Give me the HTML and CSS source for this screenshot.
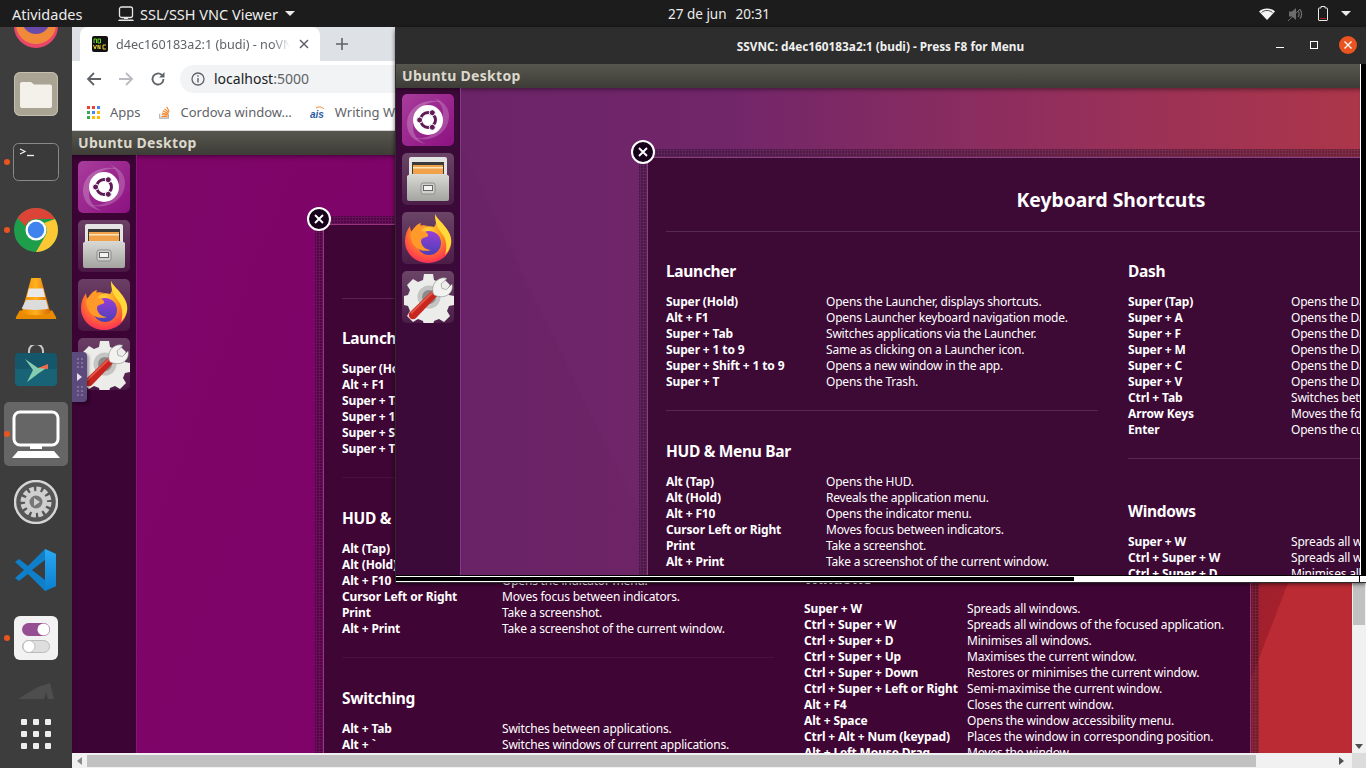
FILE: index.html
```html
<!DOCTYPE html>
<html lang="pt">
<head>
<meta charset="utf-8">
<title>SSVNC</title>
<link rel="stylesheet" href="styles.css">
</head>
<body>
<svg class="defs" width="0" height="0" aria-hidden="true">
  <defs>
    <radialGradient id="ffBody" cx="0.5" cy="0.35" r="0.75"><stop offset="0" stop-color="#ffd43a"/><stop offset="0.45" stop-color="#ff8a1e"/><stop offset="0.8" stop-color="#ff3f4e"/><stop offset="1" stop-color="#e3176f"/></radialGradient>
    <linearGradient id="ffCore" x1="0" y1="0" x2="0" y2="1"><stop offset="0" stop-color="#9a3fd6"/><stop offset="1" stop-color="#4a3fb8"/></linearGradient>
    <linearGradient id="ubuTile" x1="0" y1="0" x2="1" y2="1"><stop offset="0" stop-color="#a83d9c"/><stop offset="1" stop-color="#8c1181"/></linearGradient>
    <linearGradient id="cabFront" x1="0" y1="0" x2="0" y2="1"><stop offset="0" stop-color="#d9d9d6"/><stop offset="1" stop-color="#a3a3a0"/></linearGradient>
    <linearGradient id="vlcCone" x1="0" y1="0" x2="1" y2="0"><stop offset="0" stop-color="#f08a00"/><stop offset="0.5" stop-color="#ffb020"/><stop offset="1" stop-color="#d96a00"/></linearGradient>
    <linearGradient id="codeBlue" x1="0" y1="0" x2="0" y2="1"><stop offset="0" stop-color="#2aa9f2"/><stop offset="1" stop-color="#0a7fd0"/></linearGradient>

    <symbol id="i-ubuntu" viewBox="0 0 52 52">
      <rect width="52" height="52" rx="4" fill="url(#ubuTile)"/>
      <path d="M5 30C5 12 24 3 40 8 27 6 13 13 11 30 10 40 16 47 24 50 13 48 5 41 5 30Z" fill="#fff" opacity=".22"/>
      <path d="M47 22C47 40 28 49 12 44 25 46 39 39 41 22 42 14 38 8 32 4 41 7 47 13 47 22Z" fill="#fff" opacity=".2"/>
      <circle cx="26" cy="26" r="15" fill="#fff"/>
      <circle cx="26" cy="26" r="7.500" fill="none" stroke="#5e1b57" stroke-width="3"/>
      <circle cx="17.600" cy="26" r="3" fill="#5e1b57" stroke="#fff"/>
      <circle cx="30.300" cy="18.700" r="3" fill="#5e1b57" stroke="#fff"/>
      <circle cx="30.300" cy="33.300" r="3" fill="#5e1b57" stroke="#fff"/>
    </symbol>

    <symbol id="i-cabinet" viewBox="0 0 52 52">
      <path d="M9 4h34a2 2 0 0 1 2 2v18H7V6a2 2 0 0 1 2-2Z" fill="#e4e4e2"/>
      <rect x="10" y="9" width="32" height="14" fill="#3a3a3a"/>
      <rect x="11" y="12" width="30" height="10" fill="#f0a14a"/>
      <rect x="11" y="14" width="30" height="1.500" fill="#fbe3b8"/>
      <path d="M8 21h36l3 2v23a2 2 0 0 1-2 2H7a2 2 0 0 1-2-2V23Z" fill="url(#cabFront)"/>
      <rect x="19" y="30" width="14" height="11" rx="2" fill="#cfcfcc" stroke="#8e8e8b"/>
      <rect x="21.500" y="32.500" width="9" height="5" fill="#f4f4f2" stroke="#666"/>
    </symbol>

    <symbol id="i-firefox" viewBox="0 0 52 52">
      <path d="M33 2c2 5 7 8 11 14 4 5 6 11 5 16-1 11-11 19-23 19C13 51 3 41 3 29c0-6 2-11 5-15 0 3 1 5 2 6 1-4 5-8 9-9-1 2-1 4 0 5 5-2 10-2 13-1C36 10 33 6 33 2Z" fill="url(#ffBody)"/>
      <path d="M33 2c2 5 7 8 11 14 4 5 6 11 5 16-1 4-3 8-6 11 2-6 2-14-2-20-3-5-8-8-8-21Z" fill="#ffd93a"/>
      <circle cx="27" cy="31" r="12" fill="url(#ffCore)"/>
      <path d="M9 20c4-5 10-8 17-6-4 1-6 3-7 5 5 0 8 3 7 5-2 2-7 1-7 5 0 5 5 9 10 9-9 3-18-2-20-11-1-3-1-5 0-7Z" fill="#ff9a2a"/>
    </symbol>

    <symbol id="i-tools" viewBox="0 0 52 52">
      <path d="M22 3h9l1 6 5 2 5-3 6 6-3 5 2 5 5 1v9l-5 1-2 5 3 5-6 6-5-3-5 2-1 4h-9l-1-4-5-2-5 3-6-6 3-5-2-5-4-1v-9l4-1 2-5-3-5 6-6 5 3 5-2Z" fill="#ececea"/>
      <circle cx="27" cy="26" r="11.500" fill="#c4c4c2"/>
      <circle cx="27" cy="26" r="7" fill="#8d8a8a"/>
      <path d="M8 41 32 18l5 5-23 24a4 4 0 0 1-6-6Z" fill="#c8261f"/>
      <path d="M8.500 41.500 32 18.500l1.500 1.500-24 23Z" fill="#e2584c"/>
      <path d="M32 24c-3-5-1-13 5-16 3-1.500 6-1.500 8-.5l-6 5.500 1 4.500 4.500 1 5.500-5.500c1 3.500 0 7-2.500 9.500-4 4-10 4-15.500 1.500Z" fill="#f2f2f0" stroke="#888" stroke-width=".6"/>
    </symbol>
  </defs>
</svg>

<div class="desktop">
  <header class="topbar">
    <div class="topbar-left">
      <span class="activities">Atividades</span>
      <span class="app-menu">
        <svg class="app-glyph" viewBox="0 0 16 16"><rect x="1.500" y="1" width="13" height="10.500" rx="2" fill="none" stroke="#e6e6e6" stroke-width="1.300"/><path d="M6 11.500h4v1.500H6ZM1 13.500h14l1 1.500H0Z" fill="#e6e6e6"/></svg>
        <span>SSL/SSH VNC Viewer</span>
        <i class="caret"></i>
      </span>
    </div>
    <div class="clock"><span>27 de jun</span><span>20:31</span></div>
    <div class="tray">
      <svg class="wifi" viewBox="0 0 16 12"><path d="M0 3.500C4-.5 12-.5 16 3.500L8 12Z" fill="#f4f4f4"/><path d="M2.500 4.500C5.500 1.800 10.500 1.800 13.500 4.500" fill="none" stroke="#1c1c1c" stroke-width=".8"/></svg>
      <svg class="sound" viewBox="0 0 15 14"><path d="M1 4.500h3L8 1v12L4 9.500H1Z" fill="#6d6d6d"/><path d="M10 4c1.300 1.700 1.300 4.300 0 6M12 2.500c2.200 2.500 2.200 6.500 0 9" fill="none" stroke="#6d6d6d" stroke-width="1.200"/><path d="M0 14 12 2" stroke="#6d6d6d" stroke-width="1"/></svg>
      <svg class="battery" viewBox="0 0 10 15"><path d="M3 .5h4v1.500h2a.6.6 0 0 1 .5.5v11.500a.6.6 0 0 1-.5.5H1a.6.6 0 0 1-.5-.5V2.500A.6.6 0 0 1 1 2h2Z" fill="none" stroke="#e8e8e8"/><rect x="2" y="12" width="6" height="1" fill="#c01c1c"/></svg>
      <i class="caret caret-tray"></i>
    </div>
  </header>

  <div class="workspace">
    <aside class="dock">
      <div class="dock-item dock-first">
        <svg class="dock-icon" viewBox="0 0 44 44"><circle cx="22" cy="22" r="22" fill="#e8476a"/><circle cx="22" cy="20" r="20" fill="#f08a3a"/><circle cx="22" cy="16" r="14" fill="#6a4aa8"/></svg>
      </div>
      <div class="dock-item">
        <svg class="dock-icon" viewBox="0 0 44 44"><rect width="44" height="44" rx="6" fill="#a9a493"/><rect x=".5" y=".5" width="43" height="43" rx="6" fill="none" stroke="#c4c0b2"/><path d="M6 12a2 2 0 0 1 2-2h9l3 2.500h16a2 2 0 0 1 2 2V34a2 2 0 0 1-2 2H8a2 2 0 0 1-2-2Z" fill="#f3f1ea"/></svg>
      </div>
      <div class="dock-item is-running">
        <svg class="dock-icon terminal" viewBox="0 0 46 38"><rect x=".5" y=".5" width="45" height="37" rx="5" fill="#3a3a3a" stroke="#8a8a8a"/><path d="M7 6l5 2.500-5 2.500" fill="none" stroke="#f2f2f2" stroke-width="1.200"/><path d="M14 12.500h7" stroke="#f2f2f2" stroke-width="1.300"/></svg>
      </div>
      <div class="dock-item is-running">
        <svg class="dock-icon" viewBox="0 0 44 44"><circle cx="22" cy="22" r="22" fill="#1e9e4a"/><path d="M3.500 10A22 22 0 0 1 41 11H22a11 11 0 0 0-10.500 7Z" fill="#dc4437"/><path d="M41 11a22 22 0 0 1-19 33l9.500-16.500A11 11 0 0 0 30 15Z" fill="#fcc934"/><circle cx="22" cy="22" r="10.500" fill="#fff"/><circle cx="22" cy="22" r="8.200" fill="#3f83ee"/></svg>
      </div>
      <div class="dock-item">
        <svg class="dock-icon" viewBox="0 0 44 46"><path d="M5 36 1 43c-.5 1 0 2 1 2h40c1 0 1.500-1 1-2l-4-7Z" fill="#e98b00"/><path d="M17 2h10l10 36c-4 4-26 4-30 0Z" fill="url(#vlcCone)"/><path d="M14.500 13h15l2 9h-19Z" fill="#e9e9e9"/><path d="M11.500 25h21l2.500 9c-6 2-22 2-28 0Z" fill="#dcdcdc"/></svg>
      </div>
      <div class="dock-item">
        <svg class="dock-icon store" viewBox="0 0 44 42"><path d="M15 8V6a7 7 0 0 1 14 0v2" fill="none" stroke="#c8c8c8" stroke-width="2"/><rect x="1" y="8" width="42" height="33" rx="4" fill="#14566a"/><path d="M1 24h42v13a4 4 0 0 1-4 4H5a4 4 0 0 1-4-4Z" fill="#1d6d80" opacity=".6"/><path d="M11 14 24 23 34 22 25 28 13 37 19 25Z" fill="#86cdb0"/><path d="M24 23 34 19 34 24Z" fill="#ef6a4a"/></svg>
      </div>
      <div class="dock-item is-running is-active">
        <svg class="dock-icon monitor" viewBox="0 0 48 48"><rect x="2" y="2" width="44" height="33" rx="6" fill="none" stroke="#fff" stroke-width="3"/><path d="M18 35h12v4H18ZM6 41h36l6 7H0Z" fill="#fff"/></svg>
      </div>
      <div class="dock-item">
        <svg class="dock-icon" viewBox="0 0 44 44"><circle cx="22" cy="22" r="21" fill="#565656" stroke="#d6d6d6" stroke-width="2.400"/><circle cx="22" cy="22" r="13" fill="none" stroke="#cfcfcf" stroke-width="5" stroke-dasharray="4.500 2.300"/><circle cx="22" cy="22" r="11" fill="#cfcfcf"/><circle cx="22" cy="22" r="6.500" fill="#777"/><path d="M20 18l6 4-6 4Z" fill="#cfcfcf"/></svg>
      </div>
      <div class="dock-item">
        <svg class="dock-icon" viewBox="0 0 44 44"><path d="M31 1 14 18 5 11 1 14 10 22 1 30l4 3 9-7 17 17 11-5V6Z" fill="#0f7fc9"/><path d="M31 1 42 6v32l-11 5Z" fill="url(#codeBlue)"/><path d="M31 12 18 22l13 10Z" fill="#3c3c3c"/></svg>
      </div>
      <div class="dock-item is-running">
        <svg class="dock-icon" viewBox="0 0 44 44"><rect width="44" height="44" rx="6" fill="#f2f2f2"/><rect x="8" y="7" width="28" height="13" rx="6.500" fill="#964e92"/><circle cx="29.500" cy="13.500" r="6" fill="#fff"/><rect x="8.500" y="24.500" width="27" height="12" rx="6" fill="#dedede" stroke="#bbb"/><circle cx="15" cy="30.500" r="6" fill="#fff" stroke="#bbb"/></svg>
      </div>
      <div class="dock-item dock-dim">
        <svg class="dim-icon" viewBox="0 0 36 16"><path d="M0 16 20 4 32 0l4 16h-6l-2-7-2 7Z" fill="#4e4e4e"/></svg>
      </div>
      <div class="app-grid">
        <i></i><i></i><i></i><i></i><i></i><i></i><i></i><i></i><i></i>
      </div>
    </aside>

    <section class="browser">
      <div class="tabstrip">
        <div class="tab">
          <svg class="favicon" viewBox="0 0 16 16"><rect width="16" height="16" rx="2" fill="#111"/><path d="M2 7V3h2.500v4M6 3h2.500v4H6Z" fill="none" stroke="#6bd42a"/><path d="M1.500 9l1.500 4 1.500-4M6 13V9l2 4V9M14 9h-3v4h3" fill="none" stroke="#e3d22a"/></svg>
          <span class="tab-title">d4ec160183a2:1 (budi) - noVNC</span>
          <svg class="tab-close" viewBox="0 0 10 10"><path d="M1 1l8 8M9 1 1 9" stroke="#5f6368" stroke-width="1.500"/></svg>
        </div>
        <svg class="new-tab" viewBox="0 0 12 12"><path d="M6 0v12M0 6h12" stroke="#5f6368" stroke-width="1.600"/></svg>
      </div>
      <div class="toolbar">
        <svg class="nav-icon" viewBox="0 0 16 16"><path d="M15 8H2M8 2 2 8l6 6" fill="none" stroke="#5f6368" stroke-width="1.800"/></svg>
        <svg class="nav-icon" viewBox="0 0 16 16"><path d="M1 8h13M8 2l6 6-6 6" fill="none" stroke="#b8bbbf" stroke-width="1.800"/></svg>
        <svg class="nav-icon" viewBox="0 0 16 16"><path d="M13.500 8a5.500 5.500 0 1 1-1.700-4" fill="none" stroke="#5f6368" stroke-width="1.800"/><path d="M14.500 1v5.500H9Z" fill="#5f6368"/></svg>
        <div class="omnibox">
          <svg class="info" viewBox="0 0 14 14"><circle cx="7" cy="7" r="6" fill="none" stroke="#5f6368" stroke-width="1.300"/><path d="M7 6v4.500M7 3.300v1.500" stroke="#5f6368" stroke-width="1.400"/></svg>
          <span class="url">localhost<em>:5000</em></span>
        </div>
      </div>
      <div class="bookmarks">
        <span class="bookmark bm-apps">
          <svg class="bm-icon" viewBox="0 0 13 13"><path d="M0 0h3v3H0Z" fill="#ea4335"/><path d="M5 0h3v3H5Z" fill="#ea4335"/><path d="M10 0h3v3h-3Z" fill="#4285f4"/><path d="M0 5h3v3H0Z" fill="#34a853"/><path d="M5 5h3v3H5Z" fill="#4285f4"/><path d="M10 5h3v3h-3Z" fill="#fbbc05"/><path d="M0 10h3v3H0Z" fill="#34a853"/><path d="M5 10h3v3H5Z" fill="#fbbc05"/><path d="M10 10h3v3h-3Z" fill="#fbbc05"/></svg>
          Apps
        </span>
        <span class="bookmark bm-cordova">
          <svg class="bm-icon" viewBox="0 0 13 15"><path d="M1 9v5h10V9" fill="none" stroke="#a8a8a8" stroke-width="1.200"/><path d="M3 12h7M3 10l7 .6M3.500 8l6.800 1.800M4.500 5.500l6.200 3.200M6.500 3.200l5 4.500M9 1l3 5.500" stroke="#f48024" stroke-width="1.200"/></svg>
          Cordova window…
        </span>
        <span class="bookmark bm-ais">
          <svg class="bm-icon ais" viewBox="0 0 17 13"><text x="0" y="12" class="ais-text">ais</text><path d="M6 2c3-2 6-1 8 1" fill="none" stroke="#e8862a"/></svg>
          Writing Wizard
        </span>
      </div>
      <div class="browser-body">
        <div class="page">
          <div class="unity unity-outer">
            <div class="panel">Ubuntu Desktop</div>
            <div class="unity-main">
              <nav class="launcher">
                <svg class="tile tile-lit"><use href="#i-ubuntu"/></svg>
                <span class="tile"><svg><use href="#i-cabinet"/></svg></span>
                <span class="tile"><svg><use href="#i-firefox"/></svg></span>
                <span class="tile"><svg><use href="#i-tools"/></svg></span>
              </nav>
              <div class="wall">
                <article class="shortcuts">
                  <span class="sc-close"><svg viewBox="0 0 10 10"><path d="M1 1l8 8M9 1 1 9" stroke="#fff" stroke-width="1.900"/></svg></span>
                  <div class="sc-inner">
                    <h1 class="sc-title">Keyboard Shortcuts</h1>
                    <div class="sc-cols">
                      <div class="sc-col sc-col-left">
                        <section class="sc-sec">
                          <h2>Launcher</h2>
                          <div class="row"><b>Super (Hold)</b><span>Opens the Launcher, displays shortcuts.</span></div>
                          <div class="row"><b>Alt + F1</b><span>Opens Launcher keyboard navigation mode.</span></div>
                          <div class="row"><b>Super + Tab</b><span>Switches applications via the Launcher.</span></div>
                          <div class="row"><b>Super + 1 to 9</b><span>Same as clicking on a Launcher icon.</span></div>
                          <div class="row"><b>Super + Shift + 1 to 9</b><span>Opens a new window in the app.</span></div>
                          <div class="row"><b>Super + T</b><span>Opens the Trash.</span></div>
                        </section>
                        <section class="sc-sec">
                          <h2>HUD &amp; Menu Bar</h2>
                          <div class="row"><b>Alt (Tap)</b><span>Opens the HUD.</span></div>
                          <div class="row"><b>Alt (Hold)</b><span>Reveals the application menu.</span></div>
                          <div class="row"><b>Alt + F10</b><span>Opens the indicator menu.</span></div>
                          <div class="row"><b>Cursor Left or Right</b><span>Moves focus between indicators.</span></div>
                          <div class="row"><b>Print</b><span>Take a screenshot.</span></div>
                          <div class="row"><b>Alt + Print</b><span>Take a screenshot of the current window.</span></div>
                        </section>
                        <section class="sc-sec">
                          <h2>Switching</h2>
                          <div class="row"><b>Alt + Tab</b><span>Switches between applications.</span></div>
                          <div class="row"><b>Alt + `</b><span>Switches windows of current applications.</span></div>
                        </section>
                      </div>
                      <div class="sc-col sc-col-right">
                        <section class="sc-sec">
                          <h2>Dash</h2>
                          <div class="row"><b>Super (Tap)</b><span>Opens the Dash Home.</span></div>
                          <div class="row"><b>Super + A</b><span>Opens the Dash App Lens.</span></div>
                          <div class="row"><b>Super + F</b><span>Opens the Dash Files Lens.</span></div>
                          <div class="row"><b>Super + M</b><span>Opens the Dash Music Lens.</span></div>
                          <div class="row"><b>Super + C</b><span>Opens the Dash Photo Lens.</span></div>
                          <div class="row"><b>Super + V</b><span>Opens the Dash Video Lens.</span></div>
                          <div class="row"><b>Ctrl + Tab</b><span>Switches between Lenses.</span></div>
                          <div class="row"><b>Arrow Keys</b><span>Moves the focus.</span></div>
                          <div class="row"><b>Enter</b><span>Opens the currently focused item.</span></div>
                        </section>
                        <section class="sc-sec sc-sec-tall">
                          <h2>Windows</h2>
                          <div class="row"><b>Super + W</b><span>Spreads all windows.</span></div>
                          <div class="row"><b>Ctrl + Super + W</b><span>Spreads all windows of the focused application.</span></div>
                          <div class="row"><b>Ctrl + Super + D</b><span>Minimises all windows.</span></div>
                          <div class="row"><b>Ctrl + Super + Up</b><span>Maximises the current window.</span></div>
                          <div class="row"><b>Ctrl + Super + Down</b><span>Restores or minimises the current window.</span></div>
                          <div class="row"><b>Ctrl + Super + Left or Right</b><span>Semi-maximise the current window.</span></div>
                          <div class="row"><b>Alt + F4</b><span>Closes the current window.</span></div>
                          <div class="row"><b>Alt + Space</b><span>Opens the window accessibility menu.</span></div>
                          <div class="row"><b>Ctrl + Alt + Num (keypad)</b><span>Places the window in corresponding position.</span></div>
                          <div class="row"><b>Alt + Left Mouse Drag</b><span>Moves the window.</span></div>
                        </section>
                      </div>
                    </div>
                  </div>
                </article>
              </div>
            </div>
          </div>
          <div class="novnc-handle">
            <i class="handle-dots"></i><i class="handle-arrow"></i><i class="handle-dots"></i>
          </div>
        </div>
        <div class="vscroll">
          <div class="vthumb"></div>
          <i class="arrow-down"></i>
        </div>
        <div class="hscroll">
          <i class="arrow-left"></i>
          <div class="hthumb"></div>
          <i class="arrow-right"></i>
        </div>
        <div class="corner"></div>
      </div>
    </section>
  </div>

  <section class="vnc-window">
    <div class="vnc-title">
      <span class="vnc-caption">SSVNC: d4ec160183a2:1 (budi) - Press F8 for Menu</span>
      <div class="wm-buttons">
        <svg class="wm-min" viewBox="0 0 8 2"><rect width="8" height="1" fill="#fff"/></svg>
        <svg class="wm-max" viewBox="0 0 8 8"><rect x=".5" y=".5" width="7" height="7" fill="none" stroke="#fff"/></svg>
        <span class="wm-close"><svg viewBox="0 0 8 8"><path d="M.5.5l7 7M7.500.5l-7 7" stroke="#fff" stroke-width="1.300"/></svg></span>
      </div>
    </div>
    <div class="vnc-frame">
      <div class="vnc-view">
        <div class="unity unity-inner">
          <div class="panel">Ubuntu Desktop</div>
          <div class="unity-main">
            <nav class="launcher">
              <svg class="tile tile-lit"><use href="#i-ubuntu"/></svg>
              <span class="tile"><svg><use href="#i-cabinet"/></svg></span>
              <span class="tile"><svg><use href="#i-firefox"/></svg></span>
              <span class="tile"><svg><use href="#i-tools"/></svg></span>
            </nav>
            <div class="wall">
              <article class="shortcuts">
                <span class="sc-close"><svg viewBox="0 0 10 10"><path d="M1 1l8 8M9 1 1 9" stroke="#fff" stroke-width="1.900"/></svg></span>
                <div class="sc-inner">
                  <h1 class="sc-title">Keyboard Shortcuts</h1>
                  <div class="sc-cols">
                    <div class="sc-col sc-col-left">
                      <section class="sc-sec">
                        <h2>Launcher</h2>
                        <div class="row"><b>Super (Hold)</b><span>Opens the Launcher, displays shortcuts.</span></div>
                        <div class="row"><b>Alt + F1</b><span>Opens Launcher keyboard navigation mode.</span></div>
                        <div class="row"><b>Super + Tab</b><span>Switches applications via the Launcher.</span></div>
                        <div class="row"><b>Super + 1 to 9</b><span>Same as clicking on a Launcher icon.</span></div>
                        <div class="row"><b>Super + Shift + 1 to 9</b><span>Opens a new window in the app.</span></div>
                        <div class="row"><b>Super + T</b><span>Opens the Trash.</span></div>
                      </section>
                      <section class="sc-sec">
                        <h2>HUD &amp; Menu Bar</h2>
                        <div class="row"><b>Alt (Tap)</b><span>Opens the HUD.</span></div>
                        <div class="row"><b>Alt (Hold)</b><span>Reveals the application menu.</span></div>
                        <div class="row"><b>Alt + F10</b><span>Opens the indicator menu.</span></div>
                        <div class="row"><b>Cursor Left or Right</b><span>Moves focus between indicators.</span></div>
                        <div class="row"><b>Print</b><span>Take a screenshot.</span></div>
                        <div class="row"><b>Alt + Print</b><span>Take a screenshot of the current window.</span></div>
                      </section>
                    </div>
                    <div class="sc-col sc-col-right">
                      <section class="sc-sec">
                        <h2>Dash</h2>
                        <div class="row"><b>Super (Tap)</b><span>Opens the Dash Home.</span></div>
                        <div class="row"><b>Super + A</b><span>Opens the Dash App Lens.</span></div>
                        <div class="row"><b>Super + F</b><span>Opens the Dash Files Lens.</span></div>
                        <div class="row"><b>Super + M</b><span>Opens the Dash Music Lens.</span></div>
                        <div class="row"><b>Super + C</b><span>Opens the Dash Photo Lens.</span></div>
                        <div class="row"><b>Super + V</b><span>Opens the Dash Video Lens.</span></div>
                        <div class="row"><b>Ctrl + Tab</b><span>Switches between Lenses.</span></div>
                        <div class="row"><b>Arrow Keys</b><span>Moves the focus.</span></div>
                        <div class="row"><b>Enter</b><span>Opens the currently focused item.</span></div>
                      </section>
                      <section class="sc-sec sc-sec-tall">
                        <h2>Windows</h2>
                        <div class="row"><b>Super + W</b><span>Spreads all windows.</span></div>
                        <div class="row"><b>Ctrl + Super + W</b><span>Spreads all windows of the focused application.</span></div>
                        <div class="row"><b>Ctrl + Super + D</b><span>Minimises all windows.</span></div>
                      </section>
                    </div>
                  </div>
                </div>
              </article>
            </div>
          </div>
        </div>
        <div class="vnc-vbar"></div>
      </div>
      <div class="vnc-hbar"><div class="vnc-hthumb"></div></div>
    </div>
  </section>
</div>
</body>
</html>
```

FILE: styles.css
```css
* { box-sizing: border-box; }
html, body { margin: 0; padding: 0; height: 100%; overflow: hidden; }
body { font-family: "Noto Sans", "Open Sans", sans-serif; background: #3c3c3c; }
.defs { position: absolute; }
h1, h2 { margin: 0; }

.desktop { position: relative; width: 1366px; height: 768px; overflow: hidden; display: flex; flex-direction: column; }

/* top bar */
.topbar { height: 27px; flex: none; background: #1c1c1c; color: #ececec; font-size: 14.500px; display: grid; grid-template-columns: 656px auto 1fr; align-items: center; padding: 0 15px 0 12px; }
.topbar-left { display: flex; align-items: center; gap: 34px; }
.activities { width: 72px; white-space: nowrap; }
.app-menu { display: flex; align-items: center; gap: 6px; }
.app-glyph { width: 16px; height: 16px; }
.caret { width: 0; height: 0; border-left: 5px solid transparent; border-right: 5px solid transparent; border-top: 5px solid #ececec; margin-left: 1px; }
.clock { display: flex; gap: 9px; font-size: 13.500px; }
.tray { display: flex; align-items: center; justify-content: flex-end; }
.wifi { width: 16px; height: 12px; }
.sound { width: 15px; height: 14px; margin-left: 13px; }
.battery { width: 10px; height: 15px; margin-left: 15px; }
.caret-tray { margin-left: 13px; }

/* dock */
.workspace { flex: 1; display: flex; min-height: 0; }
.dock { width: 72px; flex: none; background: #3d3d3d; display: flex; flex-direction: column; align-items: center; position: relative; overflow: hidden; }
.dock-item { position: relative; width: 64px; height: 64px; margin-bottom: 4px; flex: none; display: flex; align-items: center; justify-content: center; border-radius: 5px; }
.dock-first { margin-top: -33px; }
.dock-icon { width: 44px; height: 44px; }
.dock-icon.terminal { width: 46px; height: 38px; }
.dock-icon.store { height: 42px; }
.dock-icon.monitor { width: 48px; height: 48px; }
.is-active { background: #666; }
.is-running::before { content: ""; position: absolute; left: 0; top: 29px; width: 6px; height: 6px; border-radius: 50%; background: #e95420; }
.dim-icon { width: 36px; height: 16px; }
.dock-dim { position: absolute; top: 656px; height: 16px; margin: 0; }
.app-grid { position: absolute; top: 692px; left: 21px; display: grid; grid-template-columns: repeat(3, 6px); gap: 6px; }
.app-grid i { width: 6px; height: 6px; border-radius: 1px; background: #ededed; }

/* browser */
.browser { flex: 1; min-width: 0; display: flex; flex-direction: column; background: #fff; }
.tabstrip { height: 34px; flex: none; background: #dee1e6; display: flex; align-items: stretch; padding-left: 8px; }
.tab { width: 240px; background: #fff; border-radius: 8px 8px 0 0; display: flex; align-items: center; padding: 0 10px 0 12px; gap: 8px; font-size: 12.600px; color: #5f6368; }
.favicon { width: 16px; height: 16px; flex: none; }
.tab-title { width: 174px; white-space: nowrap; overflow: hidden; flex: none; -webkit-mask-image: linear-gradient(90deg, #000 90%, transparent); mask-image: linear-gradient(90deg, #000 90%, transparent); }
.tab-close { width: 10px; height: 10px; flex: none; margin-left: 1px; }
.new-tab { width: 12px; height: 12px; margin: 11px 0 0 16px; }
.toolbar { height: 35px; flex: none; background: #fff; display: flex; align-items: center; padding-left: 14px; gap: 16px; }
.nav-icon { width: 16px; height: 16px; }
.omnibox { width: 400px; height: 28px; margin-left: -2px; border-radius: 14px; background: #f1f3f4; display: flex; align-items: center; padding-left: 11px; gap: 9px; }
.info { width: 14px; height: 14px; }
.url { font-size: 14px; color: #202124; }
.url em { font-style: normal; color: #5f6368; }
.bookmarks { height: 35px; flex: none; background: #fff; border-bottom: 1px solid #d4d4d4; display: flex; align-items: center; padding: 0 0 2px 15px; font-size: 13px; color: #5f6368; }
.bookmark { display: flex; align-items: center; gap: 10px; white-space: nowrap; }
.bm-icon { width: 13px; height: 13px; flex: none; }
.bm-cordova { margin-left: 17px; }
.bm-ais { margin-left: 18px; gap: 8px; }
.bm-icon.ais { width: 17px; }
.ais-text { font: italic 700 10px "Liberation Sans", sans-serif; fill: #2c5aa0; }

.browser-body { flex: 1; min-height: 0; display: grid; grid-template-columns: 1fr 14px; grid-template-rows: 1fr 15px; }
.page { position: relative; overflow: hidden; min-width: 0; }
.vscroll { background: #f1f1f1; display: flex; flex-direction: column; justify-content: space-between; align-items: center; padding: 0 1px 4px; }
.vthumb { width: 12px; height: 494px; background: #c1c1c1; }
.arrow-down { border-left: 4px solid transparent; border-right: 4px solid transparent; border-top: 5px solid #505050; }
.hscroll { background: #f1f1f1; display: flex; align-items: center; padding: 0 5px; }
.hthumb { width: 1169px; height: 12px; background: #c1c1c1; margin-left: 5px; }
.arrow-left { border-top: 4px solid transparent; border-bottom: 4px solid transparent; border-right: 5px solid #8a8a8a; }
.arrow-right { border-top: 4px solid transparent; border-bottom: 4px solid transparent; border-left: 5px solid #505050; margin-left: 83px; }
.corner { background: #dcdcdc; }

.novnc-handle { position: absolute; left: 0; top: 221px; width: 15px; height: 50px; background: #5d4a7c; border-radius: 0 4px 4px 0; box-shadow: 2px 2px 3px rgba(0, 0, 0, .35); display: flex; flex-direction: column; align-items: center; justify-content: center; gap: 4px; }
.handle-dots { width: 8px; height: 12px; background: radial-gradient(circle, #7f7099 1px, transparent 1.200px) 0 0 / 4px 4px; }
.handle-arrow { border-top: 4px solid transparent; border-bottom: 4px solid transparent; border-left: 5px solid #e6e0ee; }

/* unity desktop */
.unity { height: 100%; display: flex; flex-direction: column; }
.panel { height: 24px; flex: none; padding: 0 0 1px 6px; display: flex; align-items: center; font-size: 14px; font-weight: 700; letter-spacing: .3px; color: #dcd8cc; background: linear-gradient(#57564e, #3d3c37); }
.unity-main { flex: 1; min-height: 0; display: flex; }
.launcher { width: 65px; flex: none; padding: 6px 0 0 6px; display: flex; flex-direction: column; gap: 7px; box-shadow: inset 0 5px 5px -4px rgba(0, 0, 0, .5); }
.tile { display: block; width: 52px; height: 52px; flex: none; border-radius: 5px; background: linear-gradient(rgba(255, 255, 255, .24), rgba(255, 255, 255, .08)); }
.tile svg { display: block; width: 52px; height: 52px; }
.tile-lit { background: none; }
.wall { flex: 1; min-width: 0; position: relative; overflow: hidden; box-shadow: inset 0 5px 5px -4px rgba(0, 0, 0, .5); }
.unity-outer .launcher { background: #3c0335; border-right: 1px solid #8c1481; }
.unity-outer .wall { background: linear-gradient(111deg, #7e0669 0%, #7f0068 50%, #a3202c 91%, #bb2b33 91.100%); }
.unity-inner .launcher { background: #3c0a38; border-right: 1px solid #86398a; }
.unity-inner .wall { background: linear-gradient(244deg, transparent 0 81.600%, rgba(0, 0, 0, .025) 81.700%), linear-gradient(90deg, #6c2468 0%, #72266a 30%, #96305a 70%, #ac364a 100%); }

.shortcuts { position: absolute; left: 178px; top: 61px; width: 944px; height: 1000px; padding: 8px 8px 0; background: radial-gradient(circle, rgba(255, 255, 255, .07) 1px, transparent 1.200px) 0 0 / 3px 3px, rgba(30, 0, 30, .42); }
.sc-close { position: absolute; left: -8px; top: -9px; width: 24px; height: 24px; z-index: 1; border-radius: 50%; background: #17001a; border: 2px solid #fff; display: flex; align-items: center; justify-content: center; }
.sc-close svg { width: 10px; height: 10px; }
.sc-inner { height: 100%; color: #fff; border: 1px solid #99357f; padding: 0 0 0 18px; background: #3f0535; }
.unity-inner .sc-inner { background: #3d0a36; border-color: #8a3f80; }
.sc-title { height: 74px; margin-right: 18px; border-bottom: 1px solid rgba(255, 255, 255, .13); font-size: 19.300px; font-weight: 700; display: flex; align-items: center; justify-content: center; padding-top: 10px; }
.sc-cols { display: flex; gap: 30px; }
.sc-col { width: 432px; flex: none; }
.sc-sec { padding: 28px 0 20px; border-bottom: 1px solid rgba(255, 255, 255, .13); }
.sc-sec + .sc-sec { padding-top: 29px; }
.sc-sec + .sc-sec-tall { padding-top: 41px; }
.unity-outer .sc-sec { border-bottom-color: rgba(255, 255, 255, .05); }
.sc-sec h2 { font-size: 15.500px; font-weight: 700; line-height: 22px; letter-spacing: -.3px; margin-bottom: 12px; }
.row { display: grid; height: 16px; line-height: 16px; font-size: 12px; white-space: nowrap; }
.row b { font-weight: 700; letter-spacing: -.13px; }
.row span { letter-spacing: -.2px; }
.sc-col-left .row { grid-template-columns: 160px 1fr; }
.sc-col-right .row { grid-template-columns: 163px 1fr; }

/* vnc window */
.vnc-window { position: absolute; left: 395px; top: 27px; width: 971px; height: 556px; display: flex; flex-direction: column; background: #2d2d2d; border-radius: 5px 0 0 0; box-shadow: 0 1px 4px rgba(0, 0, 0, .6); }
.vnc-title { height: 37px; flex: none; position: relative; display: flex; align-items: center; justify-content: center; background: #2d2d2d; }
.vnc-caption { font-size: 11.800px; font-weight: 700; color: #f0f0f0; }
.wm-buttons { position: absolute; right: 9px; top: 9px; display: flex; align-items: center; }
.wm-min { width: 8px; height: 2px; margin-top: 6px; }
.wm-max { width: 8px; height: 8px; margin-left: 26px; }
.wm-close { width: 18px; height: 18px; margin-left: 21px; border-radius: 50%; background: #e95420; display: flex; align-items: center; justify-content: center; }
.wm-close svg { width: 8px; height: 8px; }
.vnc-frame { flex: 1; min-height: 0; padding-left: 1px; display: flex; flex-direction: column; background: #2d2d2d; }
.vnc-view { flex: 1; min-height: 0; display: flex; overflow: hidden; }
.vnc-view .unity { flex: 1; min-width: 0; }
.vnc-vbar { width: 6px; flex: none; background: #000; border-left: 1px solid #fff; }
.vnc-hbar { height: 8px; flex: none; background: linear-gradient(#000, #000) 963px 0 / 1px 100% no-repeat, #fff; border-top: 1px solid #000; border-bottom: 1px solid #2d2d2d; padding: 1px 0 0; }
.vnc-hthumb { width: 678px; height: 4px; background: #000; }
```
